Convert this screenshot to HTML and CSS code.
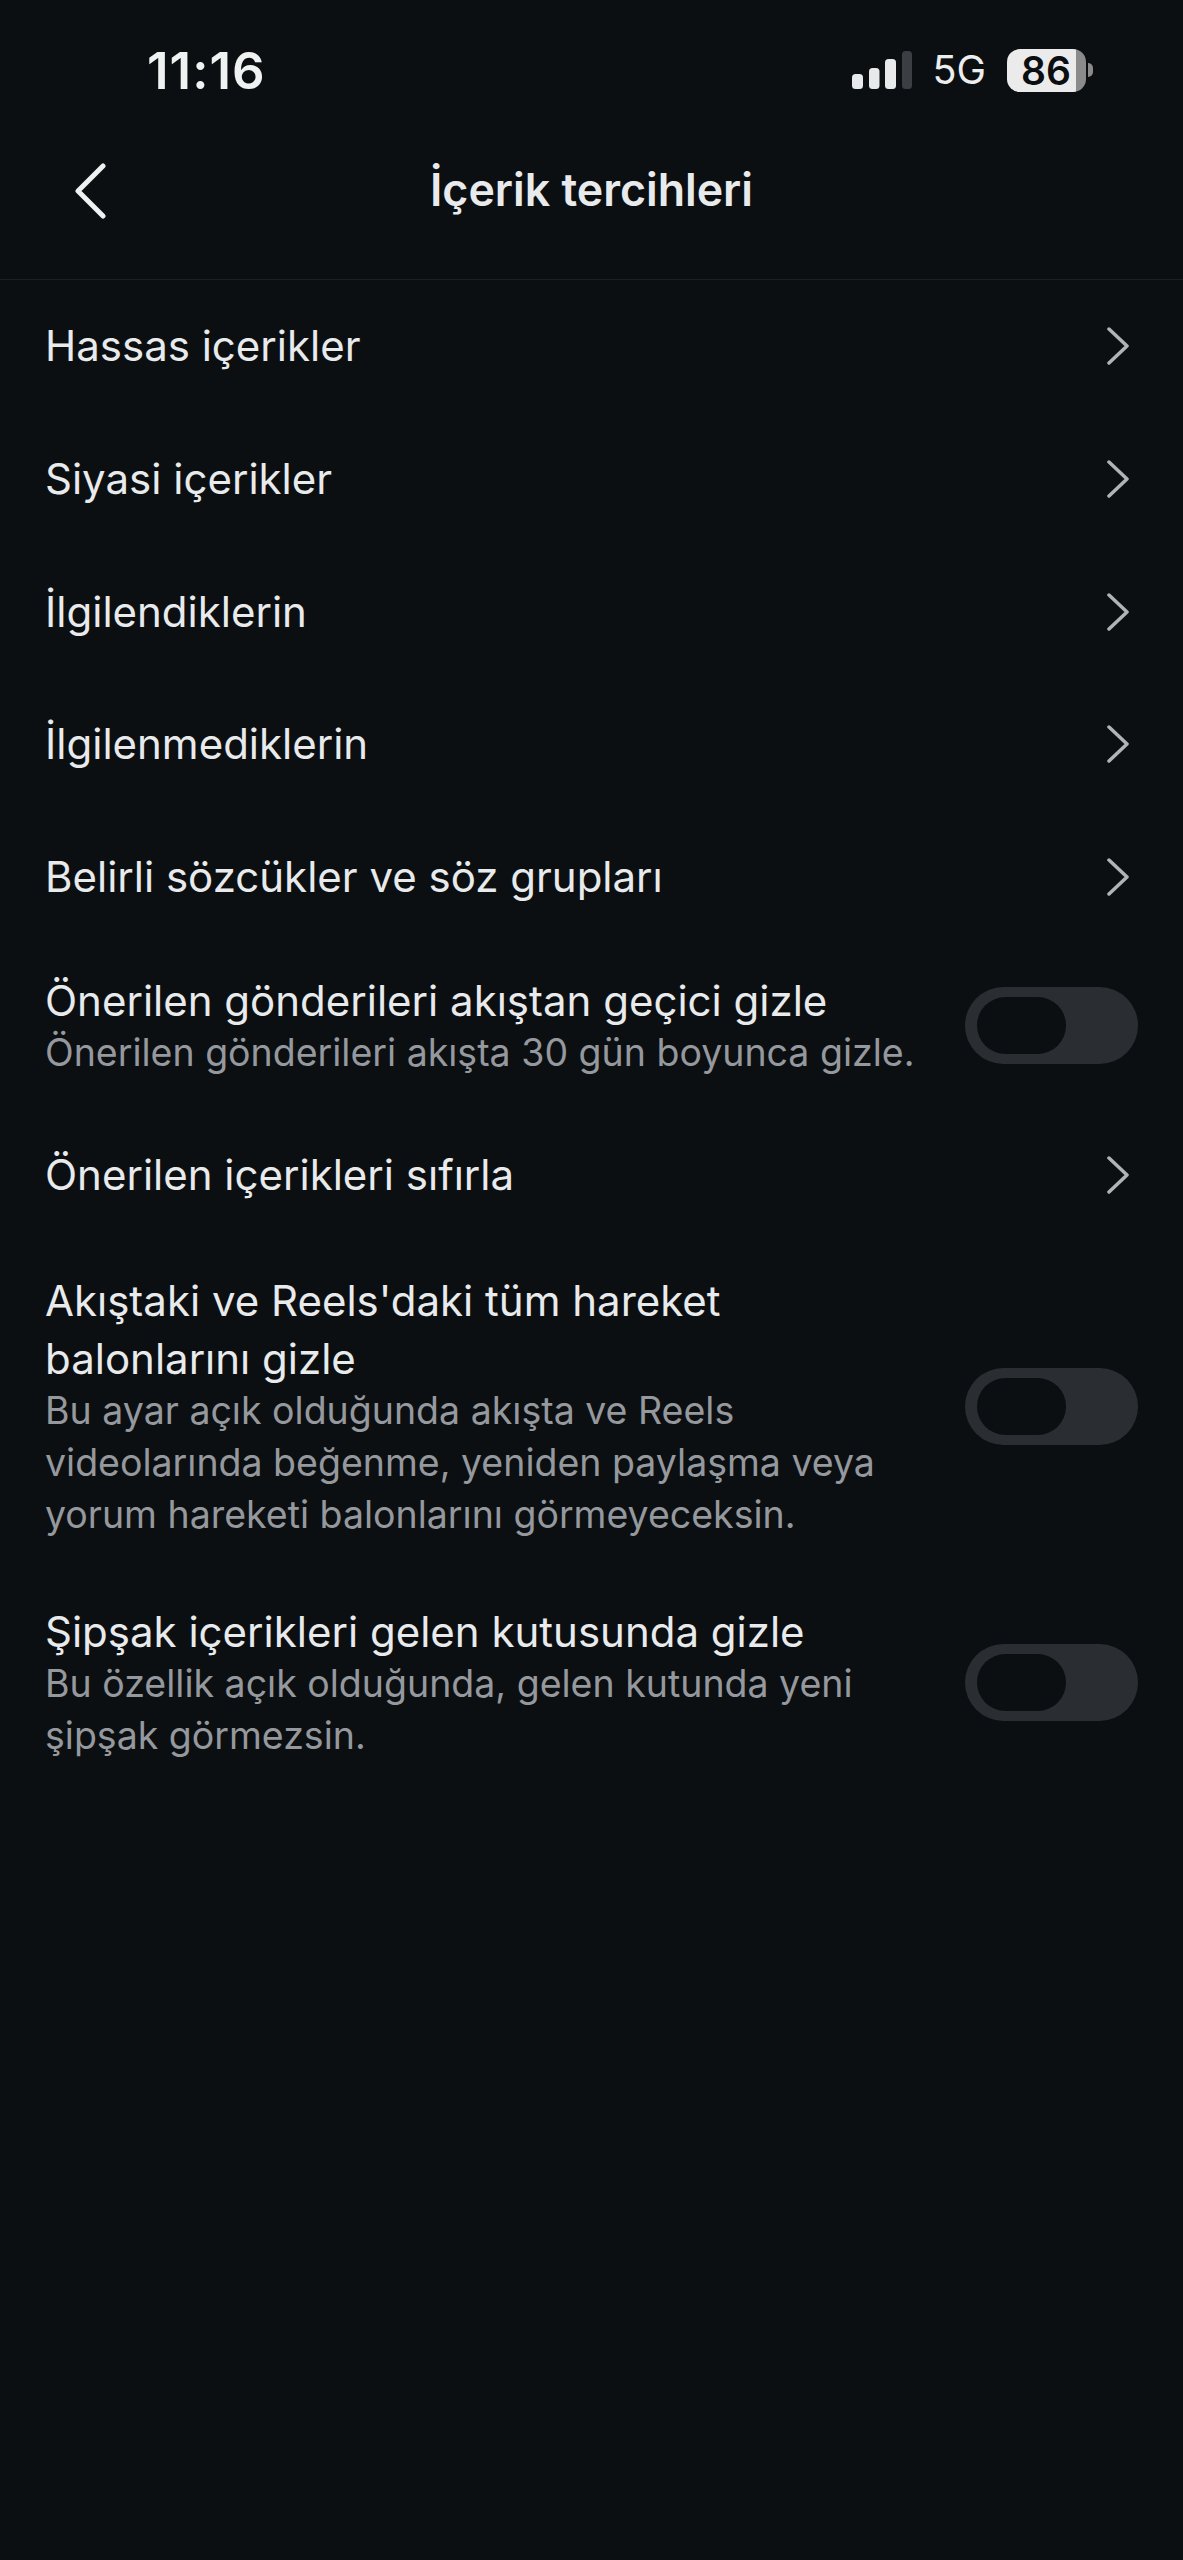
FILE: index.html
```html
<!DOCTYPE html>
<html lang="tr">
<head>
  <meta charset="UTF-8" />
  <title>İçerik tercihleri</title>
  <link rel="stylesheet" href="styles.css">
</head>
<body>
  <div class="screen">
    <!-- status bar -->
    <div class="status-bar">
      <span class="time">11:16</span>
      <div class="status-right">
        <svg class="signal" viewBox="0 0 60 38">
          <rect x="0" y="23" width="11" height="15" rx="3.5" fill="#e8e9ea"/>
          <rect x="17" y="17" width="10.500" height="21" rx="3.5" fill="#e8e9ea"/>
          <rect x="33" y="8" width="11" height="30" rx="3.500" fill="#e8e9ea"/>
          <rect x="50" y="0" width="10" height="38" rx="3.500" fill="#3b3e42"/>
        </svg>
        <span class="network">5G</span>
        <div class="battery">
          <div class="battery-body"><span class="battery-level">86</span></div>
          <div class="battery-tip"></div>
        </div>
      </div>
    </div>

    <!-- header -->
    <div class="nav-bar">
      <button class="btn-back" aria-label="Geri">
        <svg viewBox="0 0 32 56"><path d="M29 3 L4 28 L29 53"/></svg>
      </button>
      <h1 class="nav-title">İçerik tercihleri</h1>
    </div>

    <div class="list">
      <div class="row">
        <div class="row-text"><div class="row-title">Hassas içerikler</div></div>
        <svg class="chevron" viewBox="0 0 24 38"><path d="M3 2 L21 19 L3 36"/></svg>
      </div>
      <div class="row">
        <div class="row-text"><div class="row-title">Siyasi içerikler</div></div>
        <svg class="chevron" viewBox="0 0 24 38"><path d="M3 2 L21 19 L3 36"/></svg>
      </div>
      <div class="row">
        <div class="row-text"><div class="row-title">İlgilendiklerin</div></div>
        <svg class="chevron" viewBox="0 0 24 38"><path d="M3 2 L21 19 L3 36"/></svg>
      </div>
      <div class="row">
        <div class="row-text"><div class="row-title">İlgilenmediklerin</div></div>
        <svg class="chevron" viewBox="0 0 24 38"><path d="M3 2 L21 19 L3 36"/></svg>
      </div>
      <div class="row">
        <div class="row-text"><div class="row-title">Belirli sözcükler ve söz grupları</div></div>
        <svg class="chevron" viewBox="0 0 24 38"><path d="M3 2 L21 19 L3 36"/></svg>
      </div>
      <div class="row row-detail row-tight">
        <div class="row-text">
          <div class="row-title">Önerilen gönderileri akıştan geçici gizle</div>
          <div class="row-sub">Önerilen gönderileri akışta 30 gün boyunca gizle.</div>
        </div>
        <div class="toggle"><div class="toggle-knob"></div></div>
      </div>
      <div class="row">
        <div class="row-text"><div class="row-title">Önerilen içerikleri sıfırla</div></div>
        <svg class="chevron" viewBox="0 0 24 38"><path d="M3 2 L21 19 L3 36"/></svg>
      </div>
      <div class="row row-detail">
        <div class="row-text">
          <div class="row-title">Akıştaki ve Reels'daki tüm hareket balonlarını gizle</div>
          <div class="row-sub">Bu ayar açık olduğunda akışta ve Reels videolarında beğenme, yeniden paylaşma veya yorum hareketi balonlarını görmeyeceksin.</div>
        </div>
        <div class="toggle"><div class="toggle-knob"></div></div>
      </div>
      <div class="row row-detail">
        <div class="row-text">
          <div class="row-title">Şipşak içerikleri gelen kutusunda gizle</div>
          <div class="row-sub">Bu özellik açık olduğunda, gelen kutunda yeni şipşak görmezsin.</div>
        </div>
        <div class="toggle"><div class="toggle-knob"></div></div>
      </div>
    </div>
  </div>
</body>
</html>
```

FILE: styles.css
```css
html, body {
  margin: 0;
  padding: 0;
  background: #0b0f12;
}

.screen {
  width: 1183px;
  min-height: 2560px;
  background: #0b0f12;
  color: #e8eaeb;
  font-family: Inter, "Liberation Sans", sans-serif;
}

/* status bar */
.status-bar {
  display: flex;
  justify-content: space-between;
  align-items: center;
  height: 140px;
  padding: 0 90px 0 147px;
  box-sizing: border-box;
}
.time {
  font-size: 51px;
  font-weight: 600;
  letter-spacing: 1px;
  color: #f0f1f1;
}
.status-right {
  display: flex;
  align-items: center;
}
.signal {
  width: 60px;
  height: 38px;
  margin-right: 21px;
}
.network {
  font-size: 39.500px;
  color: #eceded;
  margin-right: 21px;
}
.battery {
  display: flex;
  align-items: center;
}
.battery-body {
  width: 79px;
  height: 43px;
  border-radius: 13px;
  background: linear-gradient(to right, #ebebeb 87%, #8b8b8b 87%);
  color: #0b0f12;
  font-size: 39px;
  font-weight: 600;
  line-height: 43px;
  padding-left: 14px;
  box-sizing: border-box;
}
.battery-tip {
  width: 5px;
  height: 14px;
  margin-left: 2px;
  border-radius: 0 7px 7px 0;
  background: #8b8b8b;
}

/* header */
.nav-bar {
  position: relative;
  height: 140px;
  box-sizing: border-box;
  border-bottom: 1px solid #1c2024;
  display: flex;
  align-items: center;
  justify-content: center;
}
.btn-back {
  position: absolute;
  left: 74px;
  top: 23px;
  width: 32px;
  height: 56px;
  padding: 0;
  border: none;
  background: transparent;
}
.btn-back svg {
  display: block;
  width: 32px;
  height: 56px;
  fill: none;
  stroke: #f0f1f1;
  stroke-width: 5;
  stroke-linecap: round;
  stroke-linejoin: round;
}
.nav-title {
  margin: 0 0 40px;
  font-size: 44.700px;
  font-weight: 600;
  color: #e8eaeb;
}

/* list */
.row {
  display: flex;
  align-items: center;
  justify-content: space-between;
  min-height: 132.7px;
  padding: 0 45px;
  box-sizing: border-box;
}
.row-detail {
  padding-top: 31px;
  padding-bottom: 31px;
}
.row-tight {
  padding-top: 29px;
  padding-bottom: 29px;
}
.row-text {
  flex: 1;
  min-width: 0;
  padding-right: 20px;
}
.row-title {
  max-width: 860px;
  font-size: 42px;
  line-height: 58px;
  color: #e8eaeb;
}
.row-sub {
  margin-top: -3px;
  font-size: 37.500px;
  line-height: 52px;
  color: #95989d;
}
.chevron {
  flex: none;
  width: 24px;
  height: 38px;
  margin-right: 8px;
  fill: none;
  stroke: #b1b3b6;
  stroke-width: 3.5;
  stroke-linecap: round;
  stroke-linejoin: round;
}

.toggle {
  flex: none;
  width: 173px;
  height: 77px;
  border-radius: 39px;
  background: #2a2d32;
  box-sizing: border-box;
  padding: 10px 12px;
}
.toggle-knob {
  width: 89px;
  height: 57px;
  border-radius: 29px;
  background: #0b0f12;
}
```
